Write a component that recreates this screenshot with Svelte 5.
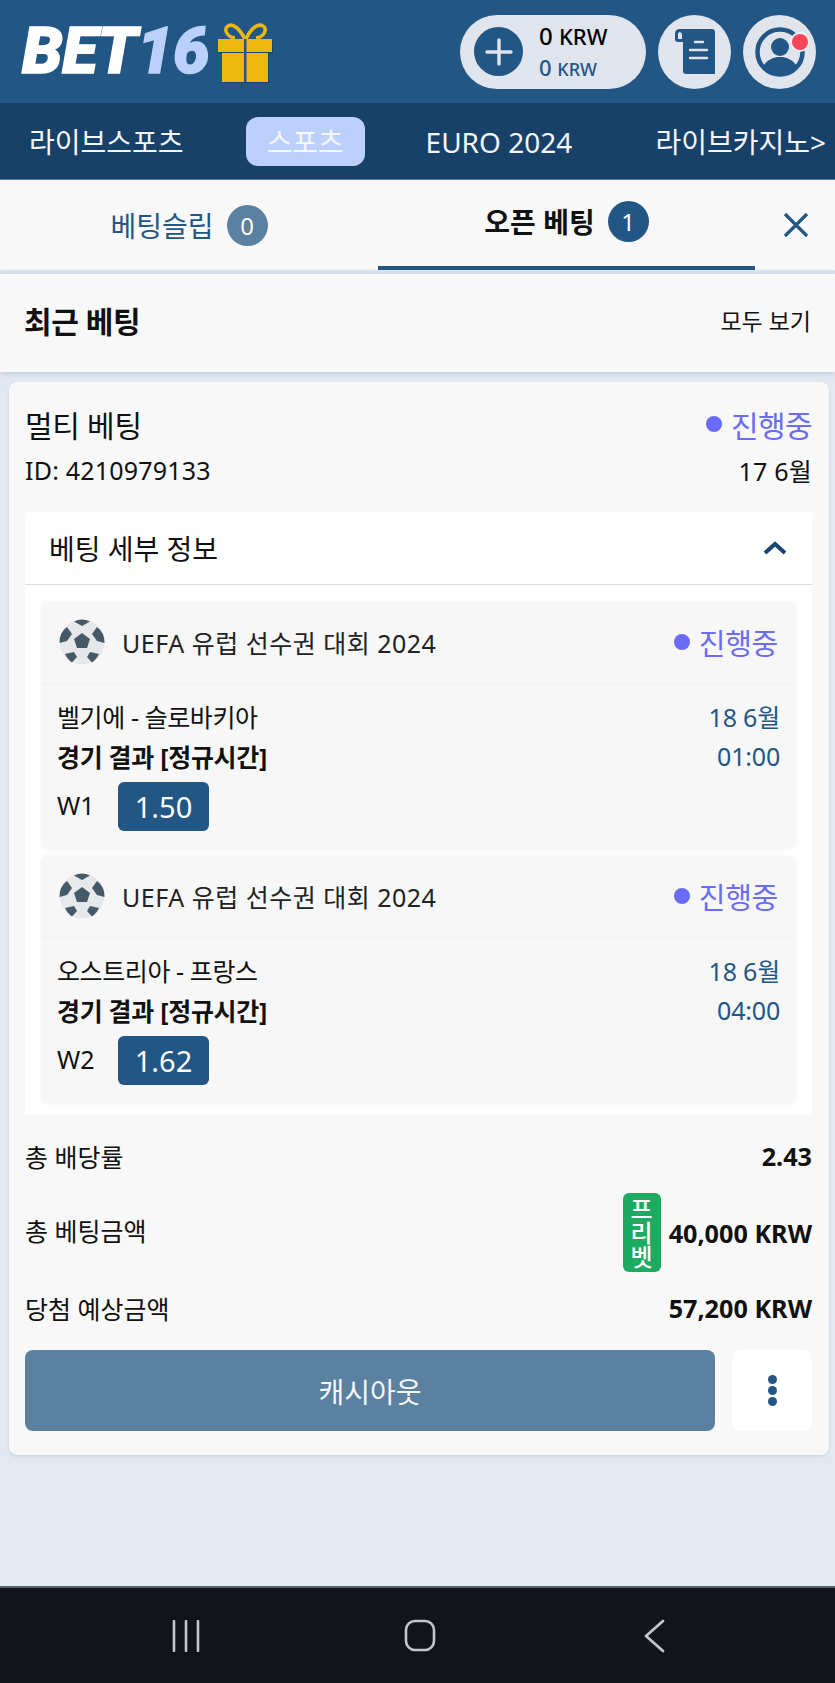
<script>
  const legs = [
    { match: '벨기에 - 슬로바키아', date: '18 6월', time: '01:00', pick: 'W1', odds: '1.50' },
    { match: '오스트리아 - 프랑스', date: '18 6월', time: '04:00', pick: 'W2', odds: '1.62' }
  ];
</script>

<div class="page">
  <header class="top">
    <div class="logo">
      <span class="logo-a">BET</span><span class="logo-b">16</span>
      <svg class="gift" width="56" height="61" viewBox="0 0 56 61">
        <path d="M27 16C21 5 15 0 10 3 5 6 9 14 17 15M28 16C33 5 40 0 45 3 50 6 46 14 38 15" fill="none" stroke="#eeb70f" stroke-width="3.5"/>
        <rect x="1" y="17" width="54" height="14" fill="#16456e"/>
        <rect x="5" y="31" width="46" height="29" fill="#16456e"/>
        <rect x="0" y="16" width="54" height="13" fill="#eeb70f"/>
        <rect x="4" y="30" width="46" height="29" fill="#eeb70f"/>
        <rect x="26" y="16" width="2.500" height="43" fill="#225684"/>
      </svg>
    </div>
    <div class="actions">
      <div class="balance">
        <span class="plus">
          <svg width="28" height="28" viewBox="0 0 28 28"><path d="M14 2V26M2 14H26" stroke="#e0e4ec" stroke-width="3.4" stroke-linecap="round"/></svg>
        </span>
        <div class="amounts">
          <div class="amt1">0 <span>KRW</span></div>
          <div class="amt2">0 <span>KRW</span></div>
        </div>
      </div>
      <button class="round" aria-label="내역">
        <svg width="40" height="45" viewBox="0 0 40 45">
          <path d="M5 0H37Q40 0 40 3V45H11Q8 45 8 42V13H3Q0 13 0 10V5Q0 0 5 0Z" fill="#225684"/>
          <path d="M4 3Q7 3 7 6V10H3V5Z" fill="#e0e4ec"/>
          <path d="M20 13H28M15 21H32M15 29H32" stroke="#e0e4ec" stroke-width="2.4" stroke-linecap="round"/>
        </svg>
      </button>
      <button class="round" aria-label="프로필">
        <svg width="52" height="52" viewBox="0 0 52 52">
          <circle cx="26" cy="26" r="22.500" fill="none" stroke="#225684" stroke-width="4.500"/>
          <circle cx="26" cy="21" r="9" fill="#225684"/>
          <path d="M8 42C13 33 20 31 26 31S39 33 44 42L38 47H14Z" fill="#225684"/>
        </svg>
        <span class="dot"></span>
      </button>
    </div>
  </header>

  <nav class="nav">
    <span class="nav-item first">라이브스포츠</span>
    <span class="nav-item active">스포츠</span>
    <span class="nav-item euro">EURO 2024</span>
    <span class="nav-item last">라이브카지노&gt;</span>
  </nav>

  <div class="tabs">
    <div class="tab">
      <span>베팅슬립</span><span class="count muted">0</span>
    </div>
    <div class="tab selected">
      <span>오픈 베팅</span><span class="count">1</span>
    </div>
    <div class="close">
      <svg width="26" height="26" viewBox="0 0 26 26"><path d="M2 2L24 24M24 2L2 24" stroke="#225684" stroke-width="3.2"/></svg>
    </div>
  </div>

  <div class="recent">
    <h2>최근 베팅</h2>
    <span>모두 보기</span>
  </div>

  <main class="main">
    <section class="card">
      <div class="row title-row">
        <span class="bet-type">멀티 베팅</span>
        <span class="status"><i></i>진행중</span>
      </div>
      <div class="row id-row">
        <span>ID: 4210979133</span>
        <span>17 6월</span>
      </div>

      <div class="panel">
        <div class="panel-head">
          <span>베팅 세부 정보</span>
          <svg width="26" height="16" viewBox="0 0 26 16"><path d="M3 13L13 4L23 13" fill="none" stroke="#16456e" stroke-width="4"/></svg>
        </div>
        <div class="legs">
          {#each legs as leg}
            <article class="leg">
              <div class="leg-head">
                <svg class="ball" width="46" height="46" viewBox="0 0 46 46">
                  <circle cx="23" cy="23" r="22.500" fill="#e6e8ec"/>
                  <path d="M23 14L31 20 28 29H18L15 20Z" fill="#455a66"/>
                  <path d="M15 2.500L23 7 31 2.500Q27 .5 23 .5T15 2.500ZM38 8L33 15 38 22 45.500 24Q46 14 38 8ZM8 8Q0 14 .5 24L8 22 13 15ZM6 35L15 33 18 38 13 43.500Q9 41 6 35ZM40 35L31 33 28 38 33 43.500Q37 41 40 35Z" fill="#455a66"/>
                </svg>
                <span class="league">UEFA 유럽 선수권 대회 2024</span>
                <span class="status"><i></i>진행중</span>
              </div>
              <div class="leg-body">
                <div class="row leg-line">
                  <span class="match">{leg.match}</span>
                  <span class="blue">{leg.date}</span>
                </div>
                <div class="row leg-line">
                  <strong>경기 결과 [정규시간]</strong>
                  <span class="blue">{leg.time}</span>
                </div>
                <div class="pick">
                  <span class="pick-name">{leg.pick}</span>
                  <span class="odds">{leg.odds}</span>
                </div>
              </div>
            </article>
          {/each}
        </div>
      </div>

      <div class="totals">
        <div class="row total t1"><span>총 배당률</span><b>2.43</b></div>
        <div class="row total t2">
          <span class="t2-label">총 베팅금액</span>
          <span class="amount"><em class="freebet">프<br />리<br />벳</em><b>40,000 KRW</b></span>
        </div>
        <div class="row total t3"><span>당첨 예상금액</span><b>57,200 KRW</b></div>
      </div>

      <div class="buttons">
        <button class="cashout">캐시아웃</button>
        <button class="more" aria-label="더 보기"><i></i><i></i><i></i></button>
      </div>
    </section>
  </main>

  <footer class="sysbar">
    <svg width="30" height="32" viewBox="0 0 30 32"><path d="M3 1V31M15 1V31M27 1V31" stroke="#c4c6c9" stroke-width="2.6" stroke-linecap="round"/></svg>
    <svg width="32" height="33" viewBox="0 0 32 33"><rect x="2" y="2" width="28" height="29" rx="9" fill="none" stroke="#c4c6c9" stroke-width="2.6"/></svg>
    <svg width="22" height="34" viewBox="0 0 22 34"><path d="M20 2L3 17L20 32" fill="none" stroke="#c4c6c9" stroke-width="2.8" stroke-linecap="round" stroke-linejoin="round"/></svg>
  </footer>
</div>

<style>
  :global(body) { margin: 0; background: #e2e9f1; }
  .page {
    width: 835px;
    height: 1683px;
    display: flex;
    flex-direction: column;
    overflow: hidden;
    font-family: "Noto Sans", "Noto Sans CJK KR", sans-serif;
    color: #111;
    background: #e2e9f1;
  }
  button { border: 0; padding: 0; font-family: inherit; }

  .top {
    height: 103px;
    flex: none;
    background: #225684;
    display: flex;
    justify-content: space-between;
    align-items: center;
    padding: 0 19px 0 22px;
    box-sizing: border-box;
  }
  .logo {
    display: flex; align-items: center; height: 74px;
    font-family: Roboto, sans-serif; font-weight: 900; font-style: italic;
    font-size: 65px; line-height: 1; letter-spacing: -0.5px;
    -webkit-text-stroke: 1.5px currentColor;
  }
  .logo-a { color: #fff; }
  .logo-b { color: #bbd0fd; }
  .gift { margin: 4px 0 0 9px; }
  .actions { display: flex; gap: 12px; align-items: center; }
  .balance {
    width: 186px; height: 74px; border-radius: 37px; background: #e0e4ec;
    display: flex; align-items: center; box-sizing: border-box; padding-left: 14px;
  }
  .plus { width: 49px; height: 49px; border-radius: 50%; background: #225684; display: flex; align-items: center; justify-content: center; flex: none; }
  .amounts { margin-left: 16px; }
  .amt1 { font-size: 24px; line-height: 32px; font-weight: 500; color: #000; }
  .amt1 span { font-size: 22px; }
  .amt2 { font-size: 22px; line-height: 30px; font-weight: 500; color: #225684; }
  .amt2 span { font-size: 18px; }
  .round { position: relative; width: 73px; height: 74px; border-radius: 50%; background: #e0e4ec; display: flex; align-items: center; justify-content: center; }
  .dot { position: absolute; right: 8px; top: 19px; width: 16px; height: 16px; border-radius: 50%; background: #f54556; box-shadow: 0 0 0 2px #eef0f4; }

  .nav {
    height: 77px; flex: none; box-sizing: border-box; background: #174168;
    display: flex; align-items: center; color: #f4f6f9; font-size: 28px;
    border-bottom: 1px solid #5c7d9b;
  }
  .nav-item { white-space: nowrap; line-height: 51px; height: 49px; }
  .first { margin-left: 29px; }
  .active { margin-left: 62px; width: 119px; text-align: center; background: #bbd0fd; border-radius: 12px; }
  .euro { margin-left: 61px; }
  .last { margin-left: auto; margin-right: 9px; }

  .tabs {
    height: 94px; flex: none; background: #f8f8f8; display: flex;
    box-sizing: border-box; border-bottom: 4px solid #dfe7ef;
  }
  .tab { display: flex; align-items: center; justify-content: center; font-size: 28px; height: 90px; box-sizing: border-box; }
  .tab:first-child { width: 378px; color: #225684; }
  .selected { width: 377px; font-weight: 700; border-bottom: 4px solid #225684; padding-bottom: 4px; color: #111; }
  .count { width: 41px; height: 41px; margin-left: 13px; border-radius: 50%; background: #225684; color: #fff; font-size: 24px; font-weight: 400; display: flex; align-items: center; justify-content: center; }
  .count.muted { background: #5a819f; }
  .close { flex: 1; display: flex; align-items: center; justify-content: center; padding-left: 2px; }

  .recent {
    height: 98px; flex: none; box-sizing: border-box; background: #f8f8f8; display: flex; justify-content: space-between; align-items: center;
    padding: 0 24px 6px 24px; box-shadow: 0 1px 6px rgba(80, 110, 140, 0.3); position: relative;
    font-size: 23px;
  }
  .recent h2 { margin: 0; font-size: 30px; font-weight: 700; letter-spacing: -0.4px; }

  .main { flex: 1; padding: 10px 6px 0 9px; min-height: 0; }
  .card { background: #f8f8f8; border-radius: 8px; padding: 0 17px 24px 16px; box-shadow: 0 1px 3px rgba(80,110,140,.2); }
  .row { display: flex; justify-content: space-between; align-items: center; }
  .title-row { height: 66px; padding-top: 18px; box-sizing: border-box; }
  .bet-type { font-size: 30px; letter-spacing: -0.3px; }
  .status { color: #6a6cf6; font-size: 30px; display: flex; align-items: center; letter-spacing: -0.6px; }
  .status i { width: 16px; height: 16px; border-radius: 50%; background: #6a6cf6; margin-right: 9px; }
  .id-row { height: 34px; font-size: 25px; letter-spacing: 0.2px; margin: 5px 0 25px; }

  .panel { background: #fff; border-radius: 4px 4px 0 0; height: 603px; }
  .panel-head {
    height: 73px; box-sizing: border-box; border-bottom: 1px solid #d9dde2; display: flex; justify-content: space-between;
    align-items: center; padding: 0 24px; font-size: 28px;
  }
  .legs { padding: 16px 16px; display: flex; flex-direction: column; gap: 6px; }
  .leg { background: #f7f7f7; border-radius: 8px; height: 248px; box-shadow: 0 1px 4px rgba(80,90,110,.06); }
  .leg-head { height: 83px; box-sizing: border-box; display: flex; align-items: center; padding: 0 18px; border-bottom: 1px solid #f0f0f0; }
  .ball { flex: none; }
  .league { flex: 1; font-size: 25px; margin-left: 17px; letter-spacing: 0.5px; color: #222; }
  .leg .status { font-size: 29px; letter-spacing: -0.3px; }
  .leg-body { padding: 12px 16px 0 16px; }
  .leg-line { height: 40px; font-size: 25px; }
  .leg-line strong { font-size: 25px; font-weight: 700; letter-spacing: -0.3px; }
  .match { letter-spacing: -0.4px; }
  .blue { color: #225684; letter-spacing: -0.2px; }
  .pick { display: flex; align-items: center; margin-top: 6px; }
  .pick-name { width: 61px; font-size: 25px; margin-bottom: 4px; }
  .odds { width: 91px; height: 49px; background: #225684; color: #fff; border-radius: 6px; font-size: 29px; display: flex; align-items: center; justify-content: center; }

  .totals { font-size: 25px; margin-top: 21px; }
  .total b { font-weight: 700; font-size: 25.2px; }
  .t1 { height: 40px; }
  .t2 { height: 79px; margin-top: 16px; }
  .t2-label { margin-bottom: 4px; }
  .t3 { height: 40px; margin-top: 17px; }
  .amount { display: flex; align-items: center; gap: 8px; margin-top: 2px; }
  .freebet { font-style: normal; width: 38px; height: 79px; background: #1daa61; color: #fff; border-radius: 6px; font-size: 24px; line-height: 24px; text-align: center; font-weight: 500; padding-top: 4px; box-sizing: border-box; }

  .buttons { display: flex; gap: 17px; margin-top: 22px; }
  .cashout { width: 690px; height: 81px; border-radius: 8px; background: #5a819f; color: #f4f6f9; font-size: 28px; }
  .more { width: 80px; height: 81px; border-radius: 8px; background: #fff; display: flex; flex-direction: column; align-items: center; justify-content: center; gap: 2px; }
  .more i { width: 9px; height: 9px; border-radius: 50%; background: #225684; }

  .sysbar { height: 97px; flex: none; background: #11141b; border-top: 2px solid #59636e; box-sizing: border-box; display: flex; align-items: center; padding-left: 171px; }
  .sysbar svg:nth-child(2) { margin-left: 203px; }
  .sysbar svg:nth-child(3) { margin-left: 207px; }
</style>
